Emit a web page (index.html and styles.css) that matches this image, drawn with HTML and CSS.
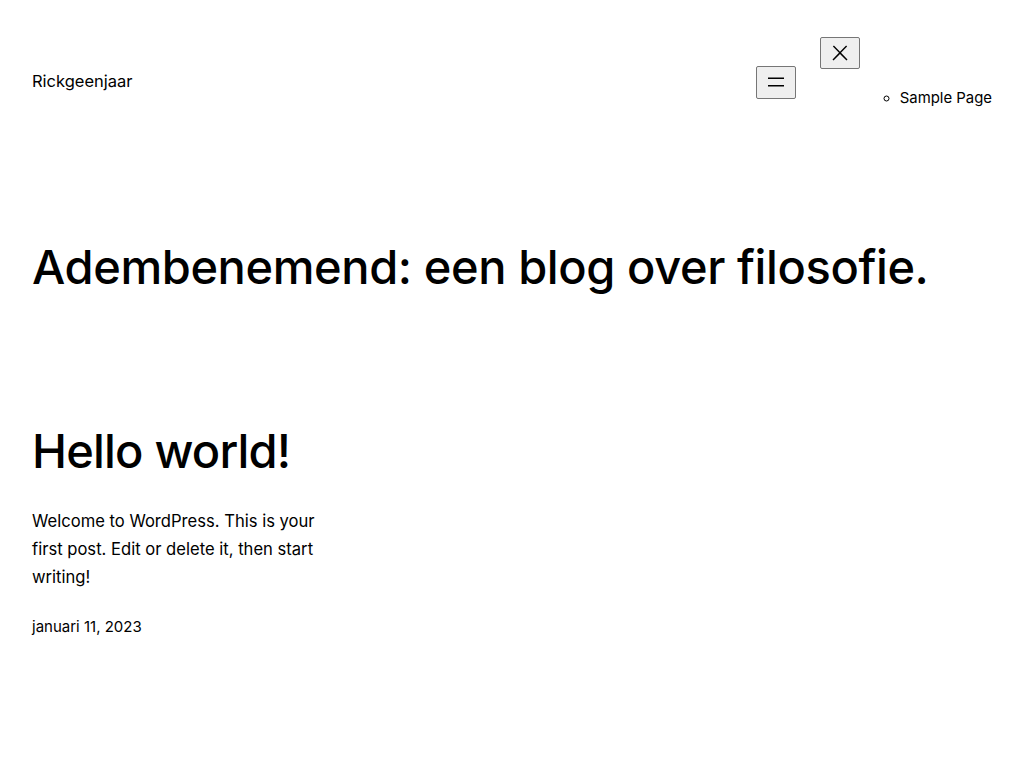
FILE: index.html
```html
<!DOCTYPE html>
<html lang="nl">
<head>
<meta charset="utf-8">
<title>Rickgeenjaar</title>
<link rel="stylesheet" href="styles.css">
</head>
<body>
<header class="site-header">
  <a class="site-title" href="#">Rickgeenjaar</a>
  <nav class="site-nav">
    <button class="nav-btn open-btn" aria-label="Menu openen">
      <svg width="24" height="24" viewBox="0 0 24 24"><rect x="4" y="7.5" width="16" height="1.5" fill="#000"/><rect x="4" y="15" width="16" height="1.5" fill="#000"/></svg>
    </button>
    <div class="nav-panel">
      <button class="nav-btn close-btn" aria-label="Menu sluiten">
        <svg width="24" height="24" viewBox="0 0 24 24"><path d="M13 11.8l6.1-6.3-1-1-6.1 6.2-6.1-6.2-1 1 6.1 6.3-6.5 6.7 1 1 6.5-6.6 6.5 6.6 1-1z" fill="#000"/></svg>
      </button>
      <ul class="nav-list">
        <li><a href="#">Sample Page</a></li>
      </ul>
    </div>
  </nav>
</header>
<main class="content">
  <h1 class="tagline">Adembenemend: een blog over filosofie.</h1>
  <article class="post">
    <h2 class="post-title"><a href="#">Hello world!</a></h2>
    <p class="post-excerpt">Welcome to WordPress. This is your first post. Edit or delete it, then start writing!</p>
    <div class="post-date">januari 11, 2023</div>
  </article>
</main>
</body>
</html>
```
FILE: styles.css
```css
html, body {
  margin: 0;
  padding: 0;
  background: #fff;
  color: #000;
}
body {
  font-family: Inter, "Liberation Sans", sans-serif;
  -webkit-font-smoothing: antialiased;
}
a {
  color: #000;
  text-decoration: none;
}
.site-header {
  display: flex;
  align-items: center;
  justify-content: space-between;
  padding: 37px 32px 0 32px;
}
.site-title {
  font-size: 16.5px;
  line-height: 24px;
  margin-top: -2px;
}
.site-nav {
  display: flex;
  align-items: center;
  gap: 24px;
}
.nav-btn {
  width: 40px;
  height: 33px;
  padding: 0;
  margin: 0;
  display: flex;
  align-items: center;
  justify-content: center;
  background: #efefef;
  border: 1px solid #767676;
  border-radius: 2px;
}
.close-btn {
  height: 32px;
}
.nav-panel {
  display: flex;
  flex-direction: column;
  align-items: flex-start;
}
.nav-list {
  list-style: circle;
  margin: 16px 0;
  padding-left: 80px;
  font-size: 14.9px;
  line-height: 26px;
}
.content {
  padding: 0 32px;
}
.tagline {
  margin: 110px 0 0 0;
  font-size: 47px;
  line-height: 60px;
  font-weight: 450;
  letter-spacing: -0.4px;
}
.post {
  margin-top: 124px;
  width: 300px;
}
.post-title {
  margin: 0;
  font-size: 47px;
  line-height: 60px;
  font-weight: 450;
  letter-spacing: -0.8px;
}
.post-excerpt {
  margin: 26px 0 0 0;
  font-size: 16.6px;
  line-height: 28px;
}
.post-date {
  margin-top: 25px;
  font-size: 15px;
  line-height: 22px;
}
```
